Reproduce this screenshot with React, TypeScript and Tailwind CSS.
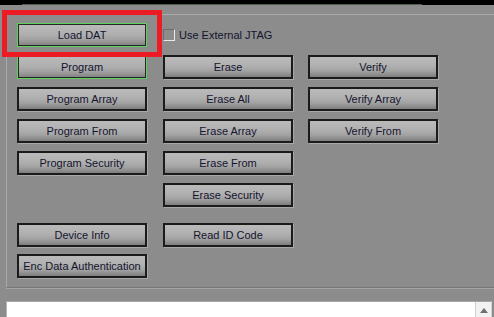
import React from 'react';

type Btn = { label: string; focus?: boolean } | null;

const rows: { cells: Btn[]; extra?: boolean; tight?: boolean }[] = [
  { cells: [{ label: 'Program', focus: true }, { label: 'Erase' }, { label: 'Verify' }] },
  { cells: [{ label: 'Program Array' }, { label: 'Erase All' }, { label: 'Verify Array' }] },
  { cells: [{ label: 'Program From' }, { label: 'Erase Array' }, { label: 'Verify From' }] },
  { cells: [{ label: 'Program Security' }, { label: 'Erase From' }, null] },
  { cells: [null, { label: 'Erase Security' }, null] },
  { cells: [{ label: 'Device Info' }, { label: 'Read ID Code' }, null], extra: true },
  { cells: [{ label: 'Enc Data Authentication' }, null, null], tight: true },
];

function Button({ label, focus }: { label: string; focus?: boolean }) {
  return (
    <button
      className={
        'w-[130px] h-[24px] flex items-center justify-center text-[11px] text-[#14142e] ' +
        'bg-[linear-gradient(to_bottom,#bababa_0%,#b0b0b0_45%,#a2a2a2_70%,#7e7e7e_100%)] ' +
        (focus
          ? 'border border-[#5bd35b] shadow-[inset_0_0_0_1px_#262626]'
          : 'border-2 border-[#1b1b1b] shadow-[1px_1px_0_#a8a8a8]')
      }
    >
      {label}
    </button>
  );
}

export default function App() {
  return (
    <div
      className="relative w-[494px] h-[317px] overflow-hidden bg-[#8c8c8c] flex flex-col"
      style={{ fontFamily: '"Liberation Sans", Arial, sans-serif' }}
    >
      {/* dark strip on top */}
      <div className="h-[5px] bg-black shrink-0">
        <div className="ml-[22px] w-[400px] h-full border-b border-[#4e5c4e]" />
      </div>

      {/* group box */}
      <div className="mt-[9px] ml-[6px] h-[274px] shrink-0 border-t border-l border-[#a9a9a9] border-b border-b-[#767676] shadow-[0_1px_0_#a4a4a4] pt-[8px] pl-[10px]">
        <div className="flex items-center h-[24px]">
          <div className="w-[146px]">
            <Button label="Load DAT" focus />
          </div>
          <label className="flex items-center gap-[4px] text-[11px] text-[#14142e]">
            <span className="w-[12px] h-[12px] border border-t-[#6c6c6c] border-l-[#6c6c6c] border-r-[#e8e8e8] border-b-[#e8e8e8]" />
            Use External JTAG
          </label>
        </div>

        <div className="mt-[8px] flex flex-col gap-[8px]">
          {rows.map((r, i) => (
            <div
              key={i}
              className={
                'grid grid-cols-[146px_145px_130px] h-[24px] ' +
                (r.extra ? 'mt-[8px] ' : '') +
                (r.tight ? '-mt-[1px]' : '')
              }
            >
              {r.cells.map((c, j) => (
                <div key={j}>{c && <Button label={c.label} focus={c.focus} />}</div>
              ))}
            </div>
          ))}
        </div>
      </div>

      {/* output box */}
      <div className="mt-[13px] ml-[6px] w-[486px] h-[30px] shrink-0 bg-white border-t border-l border-r border-t-[#a6a6a6] border-l-[#b4b4b4] border-r-[#d4d4d4] flex justify-end">
        <div className="w-[16px] h-[16px] border-l border-[#d0d0d0] bg-[#f2f2f2] flex items-center justify-center">
          <svg width="8" height="5" viewBox="0 0 8 5">
            <path d="M4 0 L8 5 L0 5 Z" fill="#707070" />
          </svg>
        </div>
      </div>

      {/* red highlight annotation */}
      <div className="absolute left-[2px] top-[10px] w-[160px] h-[47px] border-[5px] border-[#ed1c24]" />
    </div>
  );
}
